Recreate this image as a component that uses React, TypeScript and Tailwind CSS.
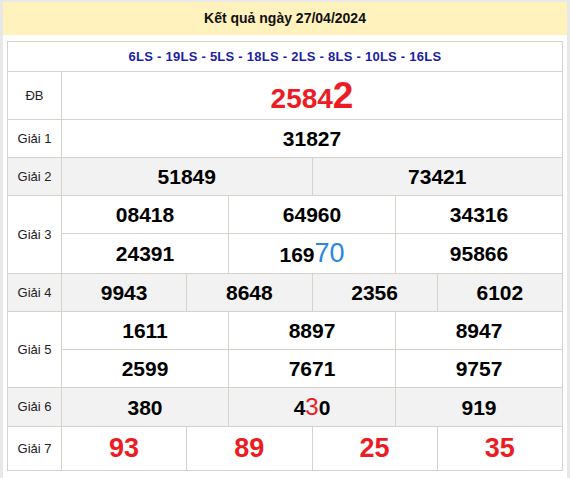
import React from 'react';

type Cell = { text: React.ReactNode; span: number };

const border = 'border border-[#d6d2cc]';

const Row = ({ label, cells, gray, h, rowSpan, showLabel = true }: { label?: string; cells: Cell[]; gray?: boolean; h: string; rowSpan?: number; showLabel?: boolean }) => (
  <tr className={`${gray ? 'bg-[#f2f2f2]' : 'bg-white'} ${h}`}>
    {showLabel && (
      <td rowSpan={rowSpan} className={`${border} text-center text-[13px] text-[#222]`}>
        {label}
      </td>
    )}
    {cells.map((c, i) => (
      <td key={i} colSpan={c.span} className={`${border} text-center text-[21px] font-bold text-black leading-none`}>
        {c.text}
      </td>
    ))}
  </tr>
);

const Red = ({ children }: { children: React.ReactNode }) => (
  <span className="text-[#ed1c24] text-[27px]">{children}</span>
);

const App = () => {
  return (
    <div className="min-h-screen bg-[#e8e8e8] px-[3px] pt-[2px]" style={{ fontFamily: '"Liberation Sans", Arial, sans-serif' }}>
      <div className="bg-white min-h-[476px]">
        <div className="h-[33px] bg-[#fff2bd] flex items-center justify-center text-[14px] font-bold text-[#111]">
          Kết quả ngày 27/04/2024
        </div>
        <div className="px-[4px] pt-[6px]">
          <table className="w-full table-fixed border-collapse">
            <colgroup>
              <col className="w-[54px]" />
              {Array.from({ length: 12 }).map((_, i) => (
                <col key={i} />
              ))}
            </colgroup>
            <tbody>
              <tr className="h-[30px]">
                <td colSpan={13} className={`${border} text-center text-[13px] tracking-[0.25px] font-bold text-[#1d1da6]`}>
                  6LS - 19LS - 5LS - 18LS - 2LS - 8LS - 10LS - 16LS
                </td>
              </tr>
              <Row
                label="ĐB"
                h="h-[48px]"
                cells={[
                  {
                    span: 12,
                    text: (
                      <span className="text-[#ed1c24] text-[28px]">
                        2584<span className="text-[37px]">2</span>
                      </span>
                    ),
                  },
                ]}
              />
              <Row label="Giải 1" h="h-[38px]" cells={[{ span: 12, text: '31827' }]} />
              <Row label="Giải 2" gray h="h-[38px]" cells={[{ span: 6, text: '51849' }, { span: 6, text: '73421' }]} />
              <Row
                label="Giải 3"
                rowSpan={2}
                h="h-[38px]"
                cells={[
                  { span: 4, text: '08418' },
                  { span: 4, text: '64960' },
                  { span: 4, text: '34316' },
                ]}
              />
              <Row
                showLabel={false}
                h="h-[40px]"
                cells={[
                  { span: 4, text: '24391' },
                  {
                    span: 4,
                    text: (
                      <>
                        169<span className="text-[#2b86e3] text-[27px] font-normal">70</span>
                      </>
                    ),
                  },
                  { span: 4, text: '95866' },
                ]}
              />
              <Row
                label="Giải 4"
                gray
                h="h-[38px]"
                cells={[
                  { span: 3, text: '9943' },
                  { span: 3, text: '8648' },
                  { span: 3, text: '2356' },
                  { span: 3, text: '6102' },
                ]}
              />
              <Row
                label="Giải 5"
                rowSpan={2}
                h="h-[38px]"
                cells={[
                  { span: 4, text: '1611' },
                  { span: 4, text: '8897' },
                  { span: 4, text: '8947' },
                ]}
              />
              <Row
                showLabel={false}
                h="h-[38px]"
                cells={[
                  { span: 4, text: '2599' },
                  { span: 4, text: '7671' },
                  { span: 4, text: '9757' },
                ]}
              />
              <Row
                label="Giải 6"
                gray
                h="h-[39px]"
                cells={[
                  { span: 4, text: '380' },
                  {
                    span: 4,
                    text: (
                      <>
                        4<span className="text-[#ed1c24] text-[24px] font-normal">3</span>0
                      </>
                    ),
                  },
                  { span: 4, text: '919' },
                ]}
              />
              <Row
                label="Giải 7"
                h="h-[44px]"
                cells={[
                  { span: 3, text: <Red>93</Red> },
                  { span: 3, text: <Red>89</Red> },
                  { span: 3, text: <Red>25</Red> },
                  { span: 3, text: <Red>35</Red> },
                ]}
              />
            </tbody>
          </table>
        </div>
      </div>
    </div>
  );
};

export default App;
